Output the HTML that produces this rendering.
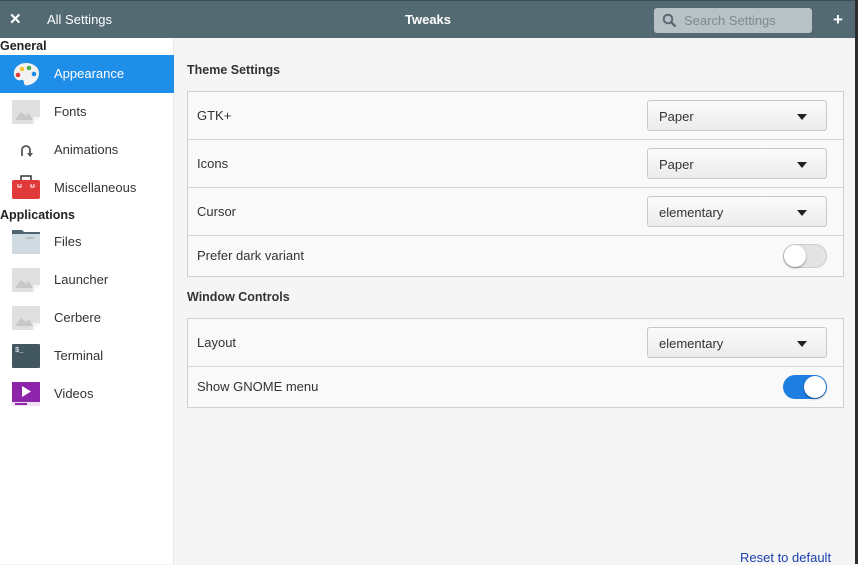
<!DOCTYPE html><html><head><style>
*{margin:0;padding:0;box-sizing:border-box}
body{width:858px;height:564px;overflow:hidden;font-family:"Liberation Sans",sans-serif;font-size:13px;color:#333;background:#f5f5f5;position:relative}
.hb{position:absolute;left:0;top:0;width:858px;height:38px;background:#536a73;border-top:1px solid #3c4d55}
.hb span{position:absolute;color:#fff;top:11px;font-size:13px}
.sb{position:absolute;left:0;top:38px;width:174px;height:526px;background:#fff;border-right:1px solid #e8e8e8}
.sec{position:absolute;left:0;font-weight:bold;font-size:12.5px;color:#222}
.it{position:absolute;left:0;width:174px;height:38px}
.it .t{position:absolute;left:54px;top:11px;font-size:13px;color:#333}
.it.sel{background:#1f8ee9}.it.sel .t{color:#fff}
.ic{position:absolute;left:12px;top:5px;width:28px;height:28px}
.h{position:absolute;left:187px;font-weight:bold;font-size:12.5px;color:#333}
.box{position:absolute;left:187px;width:657px;background:#f9f9f9;border:1px solid #cfcfcf}
.row{position:relative;height:48px;border-bottom:1px solid #d6d6d6}
.row:last-child{border-bottom:none}
.row .l{position:absolute;left:9px;top:16px}
.dd{position:absolute;left:459px;top:8px;width:180px;height:31px;border:1px solid #c8c8c8;border-radius:3px;background:linear-gradient(#fbfbfb,#ececec)}
.dd span{position:absolute;left:11px;top:8px}
.dd i{position:absolute;right:19px;top:13px;border-left:5px solid transparent;border-right:5px solid transparent;border-top:6px solid #222}
.sw{position:absolute;left:595px;width:44px;height:24px;border-radius:12px}
.sw b{position:absolute;top:1px;width:22px;height:22px;border-radius:50%;background:#fff;box-shadow:0 1px 2px rgba(0,0,0,.4)}
</style></head><body>
<div class="hb">
<span style="left:9px;top:9px;font-weight:bold;font-size:15px">✕</span>
<span style="left:47px">All Settings</span>
<span style="left:405px;font-weight:bold">Tweaks</span>
<div style="position:absolute;left:654px;top:7px;width:158px;height:25px;background:#b7c1c6;border-radius:3px">
<svg style="position:absolute;left:8px;top:5px" width="15" height="15" viewBox="0 0 15 15"><circle cx="6" cy="6" r="4.3" fill="none" stroke="#5a6a72" stroke-width="2"/><path d="M9 9l4.5 4.5" stroke="#5a6a72" stroke-width="2.4"/></svg>
<span style="left:30px;top:5px;color:#7d8a90">Search Settings</span></div>
<span style="left:833px;top:9px;font-weight:bold;font-size:17px">+</span>
</div>
<div style="position:absolute;left:855px;top:0;width:3px;height:564px;background:#2a3030"></div>
<div class="sb">
<div class="sec" style="top:1px">General</div>
<div class="it sel" style="top:17px"><svg class="ic" viewBox="0 0 28 28"><path d="M14 3C6 3 1 9 2 15c1 5 5 6 7 5 2-1 3 1 3 3 0 2 2 3 5 2 7-2 10-7 10-12C27 7 21 3 14 3z" fill="#f2f2f2"/><circle cx="10" cy="9" r="2.3" fill="#f4c430"/><circle cx="17" cy="8" r="2.3" fill="#4cae50"/><circle cx="6" cy="15" r="2.3" fill="#e53935"/><circle cx="22" cy="14" r="2.3" fill="#1e88e5"/></svg><span class="t">Appearance</span></div>
<div class="it" style="top:55px"><svg class="ic" viewBox="0 0 28 28"><path d="M0 2h28v17l-7 7H0z" fill="#e0e0e0"/><path d="M3 22l6-8 5 4 3-3 4 7z" fill="#c8c8c8"/><path d="M21 26v-7h7z" fill="#f5f5f5"/></svg><span class="t">Fonts</span></div>
<div class="it" style="top:93px"><svg class="ic" viewBox="0 0 28 28"><path d="M10 20v-6a4 4 0 0 1 8 0v4" fill="none" stroke="#555" stroke-width="1.8"/><path d="M15 17h6l-3 4z" fill="#555"/></svg><span class="t">Animations</span></div>
<div class="it" style="top:131px"><svg class="ic" viewBox="0 0 28 28"><rect x="9" y="2" width="10" height="6" fill="none" stroke="#333" stroke-width="1.5"/><rect x="0" y="6" width="28" height="19" rx="2" fill="#e03a3a"/><path d="M6 10v3h3v-3M19 10v3h3v-3" stroke="#fff" fill="none"/></svg><span class="t">Miscellaneous</span></div>
<div class="sec" style="top:170px">Applications</div>
<div class="it" style="top:185px"><svg class="ic" viewBox="0 0 28 28"><path d="M0 2h10l2 2h16v6H0z" fill="#4f6570"/><rect x="0" y="6" width="28" height="20" fill="#d0dbe1"/><path d="M14 10h8" stroke="#9aa" /></svg><span class="t">Files</span></div>
<div class="it" style="top:223px"><svg class="ic" viewBox="0 0 28 28"><path d="M0 2h28v17l-7 7H0z" fill="#e0e0e0"/><path d="M3 22l6-8 5 4 3-3 4 7z" fill="#c8c8c8"/><path d="M21 26v-7h7z" fill="#f5f5f5"/></svg><span class="t">Launcher</span></div>
<div class="it" style="top:261px"><svg class="ic" viewBox="0 0 28 28"><path d="M0 2h28v17l-7 7H0z" fill="#e0e0e0"/><path d="M3 22l6-8 5 4 3-3 4 7z" fill="#c8c8c8"/><path d="M21 26v-7h7z" fill="#f5f5f5"/></svg><span class="t">Cerbere</span></div>
<div class="it" style="top:299px"><svg class="ic" viewBox="0 0 28 28"><rect x="0" y="2" width="28" height="24" rx="1" fill="#435761"/><text x="3" y="10" font-size="7" fill="#fff" font-family="Liberation Mono">$_</text></svg><span class="t">Terminal</span></div>
<div class="it" style="top:337px"><svg class="ic" viewBox="0 0 28 28"><rect x="0" y="2" width="28" height="22" fill="#8e24aa"/><path d="M10 6v11l9-5.5z" fill="#fff"/><rect x="0" y="22" width="28" height="4" fill="#f0e0f4"/><rect x="3" y="23" width="12" height="2" fill="#8e24aa"/></svg><span class="t">Videos</span></div>
</div>
<div class="h" style="top:63px">Theme Settings</div>
<div class="box" style="top:91px">
<div class="row"><span class="l">GTK+</span><div class="dd"><span>Paper</span><i></i></div></div>
<div class="row"><span class="l">Icons</span><div class="dd"><span>Paper</span><i></i></div></div>
<div class="row"><span class="l">Cursor</span><div class="dd"><span>elementary</span><i></i></div></div>
<div class="row" style="height:40px"><span class="l" style="top:12px">Prefer dark variant</span><div class="sw" style="top:8px;background:#e4e4e4;border:1px solid #ccc"><b style="left:0;top:0"></b></div></div>
</div>
<div class="h" style="top:290px">Window Controls</div>
<div class="box" style="top:318px">
<div class="row"><span class="l">Layout</span><div class="dd"><span>elementary</span><i></i></div></div>
<div class="row" style="height:40px"><span class="l" style="top:12px">Show GNOME menu</span><div class="sw" style="top:8px;background:#1f7fe0"><b style="right:1px"></b></div></div>
</div>
<div style="position:absolute;left:740px;top:550px;color:#1b3fb0">Reset to default</div>
</body></html>
